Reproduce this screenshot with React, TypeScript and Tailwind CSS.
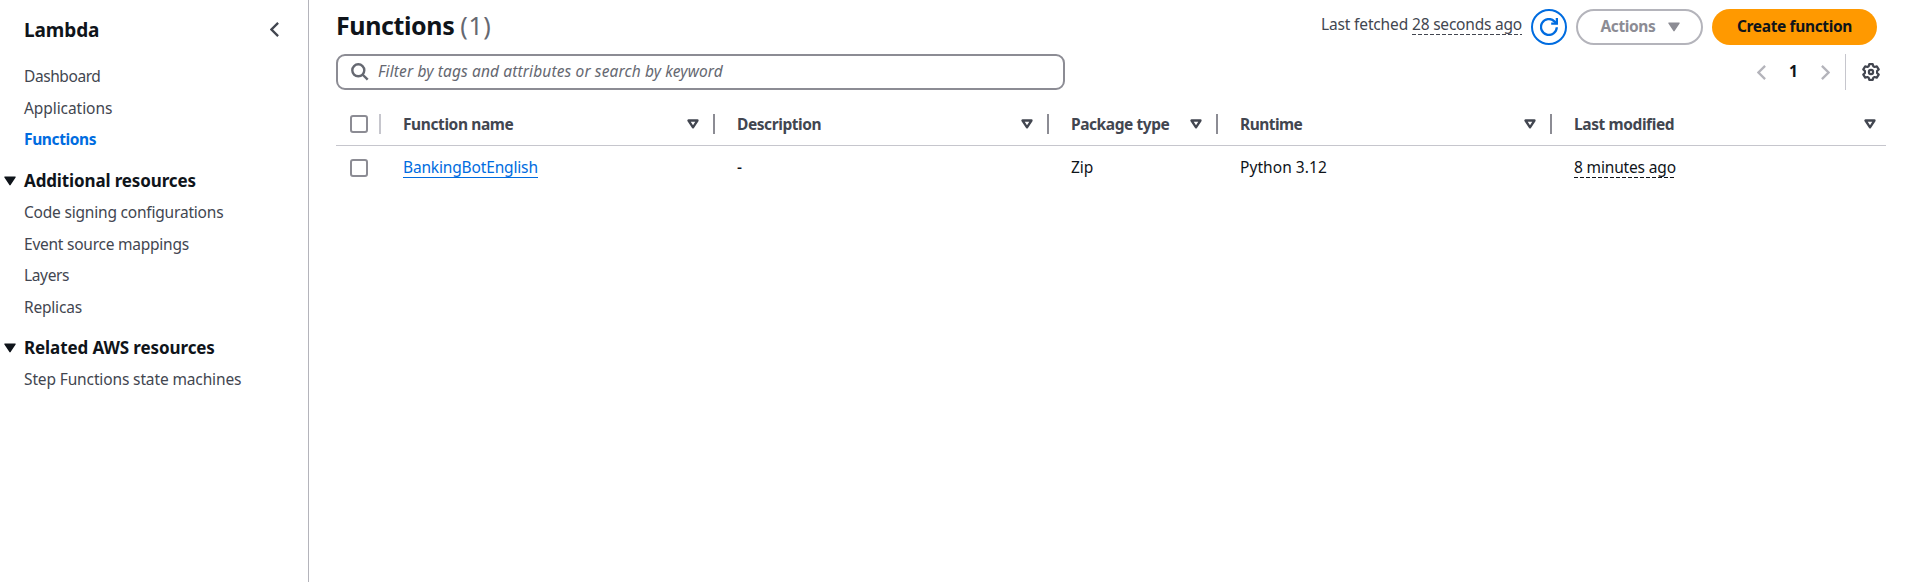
import type { ReactNode } from "react";

type NavItem = { label: string; spacing: string; active?: boolean };

const mainLinks: NavItem[] = [
  { label: "Dashboard", spacing: "tracking-[-0.42px]" },
  { label: "Applications", spacing: "tracking-[-0.07px]" },
  { label: "Functions", spacing: "tracking-[-0.38px]", active: true },
];

const additionalLinks: NavItem[] = [
  { label: "Code signing configurations", spacing: "tracking-[-0.2px]" },
  { label: "Event source mappings", spacing: "tracking-[-0.24px]" },
  { label: "Layers", spacing: "tracking-[-0.35px]" },
  { label: "Replicas", spacing: "tracking-[-0.2px]" },
];

const relatedLinks: NavItem[] = [
  { label: "Step Functions state machines", spacing: "tracking-[-0.13px]" },
];

function NavList({ items }: { items: NavItem[] }) {
  return (
    <ul>
      {items.map((item) => (
        <li
          key={item.label}
          className={`h-[31.6px] leading-[31.6px] ${item.spacing} ${
            item.active ? "font-bold text-[#006ce0]" : "text-[#424650]"
          }`}
        >
          {item.label}
        </li>
      ))}
    </ul>
  );
}

function SolidCaret({ className }: { className: string }) {
  return (
    <svg viewBox="0 0 12 10" className={`h-[10px] w-[12px] ${className}`} fill="currentColor">
      <path d="M1 .5h10c.6 0 .9.6.6 1L6.6 9c-.3.5-.9.5-1.2 0L.4 1.5C.1 1.1.4.5 1 .5z" />
    </svg>
  );
}

function SortIcon() {
  return (
    <svg viewBox="0 0 12 10" className="h-[10px] w-[12px] shrink-0" fill="none" stroke="#424650" strokeWidth="2.3" strokeLinejoin="round">
      <path d="M1.500 1.500h9L6 8.300z" />
    </svg>
  );
}

function Chevron({ flip, className }: { flip?: boolean; className: string }) {
  return (
    <svg viewBox="0 0 9 15" className={`h-[15px] w-[9px] ${className}`} fill="none" stroke="currentColor" strokeWidth="2.3">
      <path d={flip ? "M.9.9l6.600 6.600-6.600 6.600" : "M8.100.9L1.500 7.500l6.600 6.600"} />
    </svg>
  );
}

function SectionTitle({ children, className }: { children: ReactNode; className: string }) {
  return (
    <div className={`flex items-center text-[17px] font-bold text-[#0f141a] ${className}`}>
      <SolidCaret className="mr-[8px] ml-1" />
      <span>{children}</span>
    </div>
  );
}

function Checkbox() {
  return <span className="block h-[18px] w-[18px] rounded-[3px] border-2 border-[#8c8c94] bg-white" />;
}

function HeaderCell({ label, spacing, width, last }: { label: string; spacing: string; width: string; last?: boolean }) {
  return (
    <div className={`flex h-full items-center ${width}`}>
      <span className={`flex-1 pt-[2px] font-bold whitespace-nowrap text-[#424650] ${spacing}`}>{label}</span>
      <SortIcon />
      <span className={last ? "w-[10px]" : "ml-[14px] mr-0.5 h-5 w-0.5 bg-[#8c8c94]"} />
    </div>
  );
}

function DashedLine({ color }: { color: string }) {
  return (
    <span
      className={`h-px bg-[repeating-linear-gradient(90deg,currentColor_0_4px,transparent_4px_6px)] ${color}`}
    />
  );
}

export default function App() {
  return (
    <div className="flex h-[582px] w-[1912px] overflow-hidden bg-white font-['Noto_Sans',sans-serif] text-[15.5px] text-[#0f141a]">
      <aside className="w-[309px] shrink-0 border-r border-[#b4b4bb]">
        <div className="flex h-[61px] items-center justify-between pr-[29px] pl-[24px]">
          <h2 className="pb-px text-[19px] font-bold tracking-[-0.1px]">Lambda</h2>
          <Chevron className="mb-[3px] text-[#424650]" />
        </div>
        <nav>
          <div className="pl-[24px]">
            <NavList items={mainLinks} />
          </div>
          <SectionTitle className="mt-[8px] h-[34px] tracking-[-0.13px]">Additional resources</SectionTitle>
          <div className="mt-[-0.5px] pl-[24px]">
            <NavList items={additionalLinks} />
          </div>
          <SectionTitle className="mt-[7.5px] h-[34px] tracking-[-0.1px]">Related AWS resources</SectionTitle>
          <div className="mt-[-1px] pl-[24px]">
            <NavList items={relatedLinks} />
          </div>
        </nav>
      </aside>

      <main className="w-[1577px] pl-[27px]">
        <header className="flex h-[54px] justify-between pr-[9px]">
          <h1 className="flex text-[25px] leading-[50px]">
            <span className="font-bold tracking-[-0.4px]">Functions</span>
            <span className="ml-[6px] tracking-[0.6px] text-[#656871]">(1)</span>
          </h1>
          <div className="flex items-start pt-[9px]">
            <div className="flex h-[34px] pt-[5px] text-[#424650]">
              <span className="h-5 leading-[21px] tracking-[-0.15px]">Last fetched</span>
              <span className="ml-1 flex flex-col">
                <span className="h-5 leading-[21px] tracking-[-0.21px]">28 seconds ago</span>
                <DashedLine color="text-[#424650]" />
              </span>
            </div>
            <button className="ml-[9px] flex h-9 w-9 items-center justify-center rounded-full border-2 border-[#006ce0] text-[#006ce0]">
              <svg viewBox="0 0 18 18" className="h-[18px] w-[18px]" fill="none" stroke="currentColor" strokeWidth="2.3">
                <path d="M16.800 9.200A7.900 7.900 0 1 1 14.400 3.300L16.800 5.600" />
                <path d="M16.900 0v5.700h-5.700" />
              </svg>
            </button>
            <button className="ml-[9px] flex h-9 w-[127px] items-center rounded-full border-2 border-[#b4b4bb] pl-[22px] font-bold text-[#8c8c94]">
              <span className="w-[56px] tracking-[-0.38px]">Actions</span>
              <SolidCaret className="ml-3" />
            </button>
            <button className="ml-[9px] h-9 w-[165px] rounded-full bg-[#ff9900] font-bold tracking-[-0.36px]">
              Create function
            </button>
          </div>
        </header>

        <div className="flex h-9 justify-between pr-[6px]">
          <div className="flex w-[729px] items-center rounded-[9px] border-2 border-[#8c8c94] pl-[13px] text-[#656871]">
            <svg viewBox="0 0 18 18" className="h-[18px] w-[18px]" fill="none" stroke="currentColor" strokeWidth="2.4">
              <circle cx="7.300" cy="7.300" r="6" />
              <path d="M11.500 11.500l5.200 5.200" />
            </svg>
            <span className="ml-[9px] tracking-[0.13px] italic">Filter by tags and attributes or search by keyword</span>
          </div>
          <div className="flex items-center">
            <Chevron className="text-[#b4b4bb]" />
            <span className="w-[55px] pb-px text-center font-bold">1</span>
            <Chevron flip className="text-[#b4b4bb]" />
            <span className="mr-4 ml-[15px] h-full w-px bg-[#c6c6cd]" />
            <svg viewBox="0 0 18 18" className="h-[18px] w-[18px]" fill="none" stroke="#424650" strokeWidth="2.2" strokeLinejoin="round">
              <path d="M7.300 1.100h3.400l.6 2.200 1.300.7 2.200-.6 1.900 3-1.600 1.600v2l1.600 1.600-1.900 3-2.200-.6-1.300.7-.6 2.200H7.300l-.6-2.200-1.300-.7-2.200.6-1.900-3L2.900 10V8L1.300 6.400l1.900-3 2.200.6 1.300-.7z" />
              <circle cx="9" cy="9" r="2.100" />
            </svg>
          </div>
        </div>

        <section>
          <div className="mt-[14px] flex h-[42px] items-center border-b border-[#c6c6cd] pb-px">
            <div className="flex w-[67px] items-center pl-[14px]">
              <Checkbox />
              <span className="ml-[11px] h-5 w-0.5 bg-[#c6c6cd]" />
            </div>
            <HeaderCell width="w-[314px] mr-[20px]" label="Function name" spacing="tracking-[-0.4px]" />
            <HeaderCell width="w-[314px] mr-[20px]" label="Description" spacing="tracking-[-0.42px]" />
            <HeaderCell width="w-[149px] mr-[20px]" label="Package type" spacing="tracking-[-0.43px]" />
            <HeaderCell width="w-[314px] mr-[20px]" label="Runtime" spacing="tracking-[-0.54px]" />
            <HeaderCell width="w-[312px]" label="Last modified" spacing="tracking-[-0.4px]" last />
          </div>
          <div className="flex pt-[11px] leading-5">
            <div className="w-[67px] pt-[2px] pl-[14px]">
              <Checkbox />
            </div>
            <div className="w-[334px]">
              <a className="inline-block h-[21px] border-b border-[#006ce0] tracking-[-0.16px] text-[#006ce0]">BankingBotEnglish</a>
            </div>
            <div className="w-[334px] font-medium">-</div>
            <div className="w-[169px]">Zip</div>
            <div className="w-[334px] tracking-[0.06px]">Python 3.12</div>
            <div className="flex flex-col">
              <span className="tracking-[-0.16px]">8 minutes ago</span>
              <DashedLine color="text-[#0f141a]" />
            </div>
          </div>
        </section>
      </main>
    </div>
  );
}
